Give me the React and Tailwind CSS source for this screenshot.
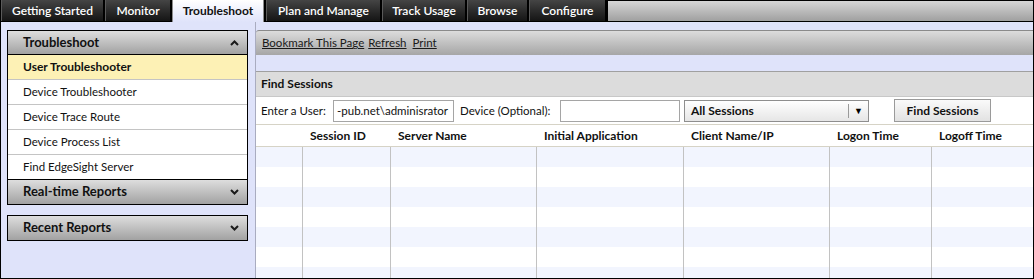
import React from "react";

const tabs = [
  { label: "Getting Started", w: "w-[102px]" },
  { label: "Monitor", w: "w-[65px]" },
  { label: "Troubleshoot", w: "w-[92px]", active: true },
  { label: "Plan and Manage", w: "w-[114px]" },
  { label: "Track Usage", w: "w-[83px]" },
  { label: "Browse", w: "w-[60px]" },
  { label: "Configure", w: "w-[76px]" },
];

const tools = ["Device Troubleshooter", "Device Trace Route", "Device Process List", "Find EdgeSight Server"];

const columns = [
  { label: "", w: "w-[46px]" },
  { label: "Session ID", w: "w-[88px]" },
  { label: "Server Name", w: "w-[146px]" },
  { label: "Initial Application", w: "w-[147px]" },
  { label: "Client Name/IP", w: "w-[146px]" },
  { label: "Logon Time", w: "w-[102px]" },
  { label: "Logoff Time", w: "flex-1" },
];

function Chevron({ up }) {
  return (
    <svg width="9" height="6" viewBox="0 0 9 6" className="shrink-0">
      <polyline
        points={up ? "1,5 4.5,1.5 8,5" : "1,1 4.5,4.5 8,1"}
        fill="none"
        stroke="#1a1a1a"
        strokeWidth="2"
      />
    </svg>
  );
}

function PanelHeader({ title, up, className = "" }) {
  return (
    <div
      className={
        "h-[24px] flex items-center justify-between pl-[15px] pr-[8px] bg-gradient-to-b from-[#dedede] to-[#a2a2a2] " +
        className
      }
    >
      <span className="text-[13px] font-bold text-[#111]">{title}</span>
      <Chevron up={up} />
    </div>
  );
}

export default function App() {
  return (
    <div className="w-[1034px] h-[279px] bg-[#dfe3fa] border-l border-r border-b border-black flex flex-col overflow-hidden font-['Lato',sans-serif] text-[12px] text-[#111]">
      {/* Tabs */}
      <div className="h-[22px] flex bg-black shrink-0">
        {tabs.map((t) =>
          t.active ? (
            <div
              key={t.label}
              className={t.w + " mr-[2px] h-[22px] flex items-center justify-center border-l border-r border-[#8c8c8c] bg-gradient-to-b from-white to-[#dfe3fa] text-[#111] font-bold"}
            >
              {t.label}
            </div>
          ) : (
            <div
              key={t.label}
              className={t.w + " mr-[2px] h-[21px] flex items-center justify-center border-l border-[#5a5a5a] bg-gradient-to-b from-[#454545] to-[#151515] text-white font-semibold"}
            >
              {t.label}
            </div>
          )
        )}
        <div className="flex-1 h-[21px] border-l border-t border-black bg-gradient-to-b from-[#d6d6d6] to-[#a0a0a0]" />
      </div>

      <div className="flex-1 flex min-h-0">
        {/* Sidebar */}
        <div className="w-[254px] shrink-0 pl-[6px] pt-[8px]">
          <div className="w-[241px] border border-black">
            <PanelHeader title="Troubleshoot" up className="border-b border-black" />
            <div className="h-[25px] flex items-center pl-[15px] bg-[#fdf1b5] border-b border-[#c4c4c4] font-bold">
              User Troubleshooter
            </div>
            {tools.map((t, i) => (
              <div
                key={t}
                className={
                  "h-[25px] flex items-center pl-[15px] bg-white text-[11.5px] " +
                  (i < tools.length - 1 ? "border-b border-[#c4c4c4]" : "border-b border-black")
                }
              >
                {t}
              </div>
            ))}
            <PanelHeader title="Real-time Reports" />
          </div>
          <div className="w-[241px] border border-black mt-[10px]">
            <PanelHeader title="Recent Reports" />
          </div>
        </div>

        {/* Main */}
        <div className="flex-1 flex flex-col border-l border-[#a9acc0] pt-[8px] min-w-0">
          <div className="h-[25px] shrink-0 flex items-center pl-[6px] border-t border-[#8a8a8a] rounded-tl-[3px] bg-gradient-to-b from-[#dcdcdc] to-[#a6a6a6] text-[11.5px] text-[#1a1a1a]">
            <span className="underline">Bookmark This Page</span>
            <span className="underline ml-[4px]">Refresh</span>
            <span className="underline ml-[6px]">Print</span>
          </div>

          <div className="mt-[16px] flex-1 flex flex-col bg-white border-t border-[#a0a0a0] min-h-0">
            <div className="h-[25px] shrink-0 flex items-center pl-[5px] bg-[#dcdcdc] border-b border-[#c8c8c8] font-bold">
              Find Sessions
            </div>
            <div className="h-[28px] shrink-0 flex items-center pl-[5px] border-b border-[#d6d3c6] text-[11.5px]">
              <span className="w-[72px] shrink-0">Enter a User:</span>
              <input
                readOnly
                value="-pub.net\adminisrator"
                className="w-[121px] h-[22px] px-[3px] border border-[#a5a5a5] bg-white outline-none text-[11.5px]"
              />
              <span className="ml-[6px] w-[100px] shrink-0">Device (Optional):</span>
              <input
                readOnly
                value=""
                className="w-[120px] h-[22px] px-[3px] border border-[#a5a5a5] bg-white outline-none"
              />
              <div className="ml-[4px] w-[185px] h-[22px] flex items-center border border-[#8e8e8e] bg-gradient-to-b from-white to-[#e6e6e6] text-[12px]">
                <span className="flex-1 pl-[6px] font-bold">All Sessions</span>
                <span className="h-[14px] border-l border-[#9a9a9a]" />
                <span className="w-[19px] flex justify-center text-[9px] text-black">▼</span>
              </div>
              <div className="ml-[25px] w-[97px] h-[23px] flex items-center justify-center border border-[#9a9a9a] bg-gradient-to-b from-[#fafafa] to-[#e2e2e2] font-bold text-[12px]">
                Find Sessions
              </div>
            </div>

            <div className="h-[22px] shrink-0 flex items-center border-b border-[#d6d3c6] font-bold">
              {columns.map((c, i) => (
                <div key={i} className={c.w + " shrink-0 pl-[8px]"}>
                  {c.label}
                </div>
              ))}
            </div>

            <div className="flex-1 flex flex-col min-h-0 overflow-hidden">
              {[0, 1, 2, 3, 4, 5, 6].map((r) => (
                <div key={r} className={"h-[20px] shrink-0 flex " + (r % 2 === 0 ? "bg-[#f2f5fe]" : "bg-white")}>
                  {columns.map((c, i) => (
                    <div key={i} className={c.w + " shrink-0 " + (i > 0 ? "border-l border-[#c2c2c2]" : "")} />
                  ))}
                </div>
              ))}
            </div>
          </div>
        </div>
      </div>
    </div>
  );
}
